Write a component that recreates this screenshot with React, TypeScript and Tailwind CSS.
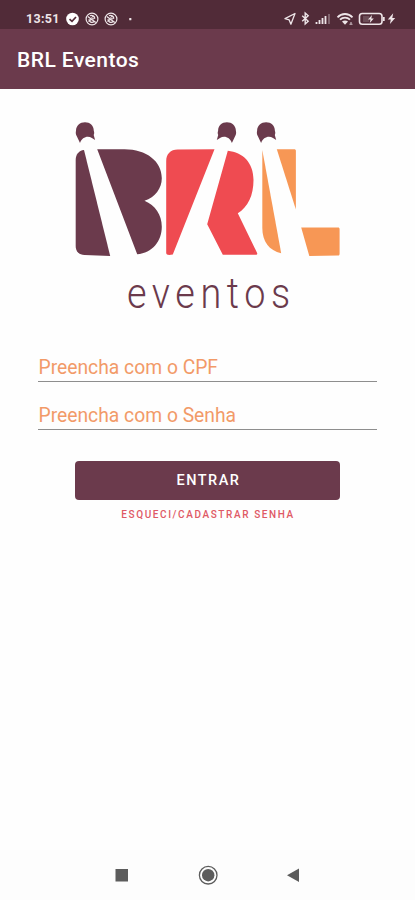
import { useState } from 'react'

interface FieldProps {
  label: string
  type?: string
  value: string
  onChange: (value: string) => void
}

function StatusBar() {
  return (
    <div className="flex h-[29px] items-end justify-between bg-[#512b38] pr-[18px] pl-[26px] text-[#eee5e8]">
      <div className="flex h-[21px] items-center">
        <span className="w-[40px] pt-px text-[12.5px] leading-none font-bold tracking-[0.3px]">13:51</span>
        <svg width="70" height="14" viewBox="0 0 70 14" fill="none" aria-hidden="true">
          <circle cx="6.5" cy="7" r="6.3" fill="#fff" />
          <path d="M3.5 7.2 6 9.4 10 5" stroke="#512b38" strokeWidth="1.7" />
          {[26, 45].map((cx) => (
            <g key={cx} transform={`translate(${cx} 7)`} stroke="currentColor">
              <circle r="5.9" strokeWidth="1.2" />
              <path d="m-4.2-2.5 8 6M-3.5 2.5 0-.2M-2-3.2C0-4.5 3-2.8 2.7-.2M-3 .2C-3 3 0 4.2 2 2.8" strokeWidth="1.3" />
              <circle cx="1.1" cy="-1.3" r="1.3" strokeWidth="1" />
            </g>
          ))}
          <rect x="63.2" y="6" width="2.2" height="2.2" rx="0.5" fill="currentColor" />
        </svg>
      </div>
      <svg width="114" height="21" viewBox="283 8 114 21" fill="none" stroke="currentColor" aria-hidden="true">
        <path d="m295 13.5-10 5.2 4.2 1.2 1.7 4.3Z" strokeWidth="1.3" strokeLinejoin="round" />
        <path d="m302.2 15.8 6 5.4-3 2.8V13l3 2.8-6 5.4" strokeWidth="1.4" />
        <path d="M316.5 24v-2M319.5 24v-4M322.5 24v-6M325.5 24v-8" strokeWidth="1.8" />
        <path d="M329 24V14" strokeWidth="1.8" opacity="0.35" />
        <path d="M337.5 17.3c4.2-4.4 10.8-4.4 15 0M340 19.7c2.9-2.8 7.1-2.8 10 0" strokeWidth="1.8" />
        <path d="m342 21.5 3 3.2 3-3.2c-1.8-1.5-4.2-1.5-6 0Z" fill="currentColor" stroke="none" />
        <path d="M349.5 24.3h3M351 22v2" strokeWidth="1.1" opacity="0.8" />
        <rect x="359.5" y="13.5" width="22.5" height="10.8" rx="2.8" strokeWidth="1.6" />
        <path d="M383.8 17v4" strokeWidth="1.8" />
        <path d="M363 16h6.3v6H363Z" fill="#a08c91" stroke="none" opacity="0.35" />
        <path d="m372 15-4 4.4h2.5L369.8 23l4-4.6h-2.5Z" fill="currentColor" stroke="none" />
        <path d="m393.2 13.2-5.4 6.2h3l-.9 4.7 5.3-6.2h-2.9Z" fill="currentColor" stroke="none" />
      </svg>
    </div>
  )
}

/** Lamp housing on top of a beam, drawn around its own centre. */
const LAMP =
  'M-5 12.2-8.2 5.6C-9.2 4-9.5 2-9 0-8.8-5-5-8.4 0-8.4S8.8-5 8.8 0c.6 1.600.5 3-.1 4.200l1.400 5.200-3.200-2.200C2.500 4.500-3 6.500-5 12.200Z'

/** Brand mark: three spotlights whose beams cut through the coloured blocks. */
function BrandMark() {
  return (
    <svg className="mx-auto block" width="265" height="136" viewBox="75.5 121 265 136" role="img" aria-label="BRL">
      <g fill="#6b3a4c">
        <path d={LAMP} transform="translate(85.5 130.7)" />
        <path d={LAMP} transform="translate(227.4 130.7) scale(-1 1)" />
        <path d={LAMP} transform="translate(266.6 130.7)" />
        <path d="M84.5 150 110.7 256 85 255c-5.5-.3-8.8-3.5-8.8-9v-86c0-5.5 3-9.5 8.3-10Z" />
        <path d="M97.7 149.2H125c22 0 37.3 12 37.3 29 0 10-6.5 19-17.3 22.5 10.8 4.5 17.3 14 17.3 26 0 14.5-9.5 26-24.6 27.6Z" />
      </g>
      <g fill="#ef4b51">
        <path d="M215 149.2 173.3 254.5c-4.3.9-6.6.3-6.6-1.5v-92c0-7 4.3-11.5 11.5-11.5Z" />
        <path d="M228.3 150.7c15 1.6 25.7 11.5 25.7 29.3 0 15.5-5.5 27-15.7 33.3l19.2 39.4c.6 1.3.1 2-1.2 2h-33l-15.6-30.4Z" />
      </g>
      <g fill="#f79755">
        <path d="m262.8 150 18.9 103.3c-12-2.6-18.9-12-18.9-25.3Z" />
        <path d="M277.3 149.2h17.2c1.4 0 1.9.6 1.9 1.9v58.4Z" />
        <path d="M301.7 227.6h36.7c1.2 0 1.7.5 1.7 1.7v24.5c0 1.2-.5 1.7-1.7 1.7l-28.6.4Z" />
      </g>
    </svg>
  )
}

function Field({ label, type = 'text', value, onChange }: FieldProps) {
  return (
    <input
      type={type}
      value={value}
      placeholder={label}
      aria-label={label}
      onChange={(e) => onChange(e.target.value)}
      className="block h-[30px] w-full border-b-[1.5px] border-[#8e8e8e] pt-px pl-[0.5px] text-[19.3px] text-[#f29a68] outline-none placeholder:text-[#f29a68] placeholder:opacity-100"
    />
  )
}

function NavigationBar() {
  return (
    <nav className="flex h-[50px] items-center justify-center gap-[66px] bg-[#fdfdfd] text-[#5c5c5c]">
      <button type="button" aria-label="Recentes">
        <svg width="20" height="20" viewBox="0 0 20 20" fill="currentColor">
          <rect x="3.5" y="4" width="12.5" height="12.5" />
        </svg>
      </button>
      <button type="button" aria-label="Início">
        <svg width="20" height="20" viewBox="0 0 20 20" fill="currentColor">
          <circle cx="10.2" cy="10.2" r="8.8" fill="none" stroke="currentColor" strokeWidth="1.3" />
          <circle cx="10.2" cy="10.2" r="6.2" />
        </svg>
      </button>
      <button type="button" aria-label="Voltar">
        <svg width="20" height="20" viewBox="0 0 20 20" fill="currentColor">
          <path d="M15 3.5V17L3 10.2Z" />
        </svg>
      </button>
    </nav>
  )
}

export default function App() {
  const [cpf, setCpf] = useState('')
  const [senha, setSenha] = useState('')

  return (
    <div className="flex h-screen flex-col bg-[#fefefe] font-[Roboto,sans-serif]">
      <StatusBar />
      <header className="flex h-[60px] items-center bg-[#6b3a4c] pt-[2px] pl-[17px]">
        <h1 className="text-[21px] leading-6 font-medium tracking-[0.45px] text-white">BRL Eventos</h1>
      </header>

      <main className="flex-1 pt-8">
        <BrandMark />
        <p className="mt-[12px] origin-left scale-x-90 pl-[141px] text-[42px] leading-[50px] font-light tracking-[6.2px] text-[#6b3a4c]">
          eventos
        </p>

        <form className="mt-[33px]" onSubmit={(e) => e.preventDefault()}>
          <div className="space-y-[18px] px-[38px]">
            <Field label="Preencha com o CPF" value={cpf} onChange={setCpf} />
            <Field label="Preencha com o Senha" type="password" value={senha} onChange={setSenha} />
          </div>
          <button
            type="submit"
            className="mx-auto mt-[31px] block h-[39px] w-[265px] rounded bg-[#6b3a4c] pt-px pl-[2px] text-[14.5px] font-medium tracking-[1.5px] text-white"
          >
            ENTRAR
          </button>
          <button
            type="button"
            className="mx-auto mt-[7px] block pl-px text-[10px] leading-4 font-medium tracking-[1.6px] text-[#df5965]"
          >
            ESQUECI/CADASTRAR SENHA
          </button>
        </form>
      </main>

      <NavigationBar />
    </div>
  )
}
